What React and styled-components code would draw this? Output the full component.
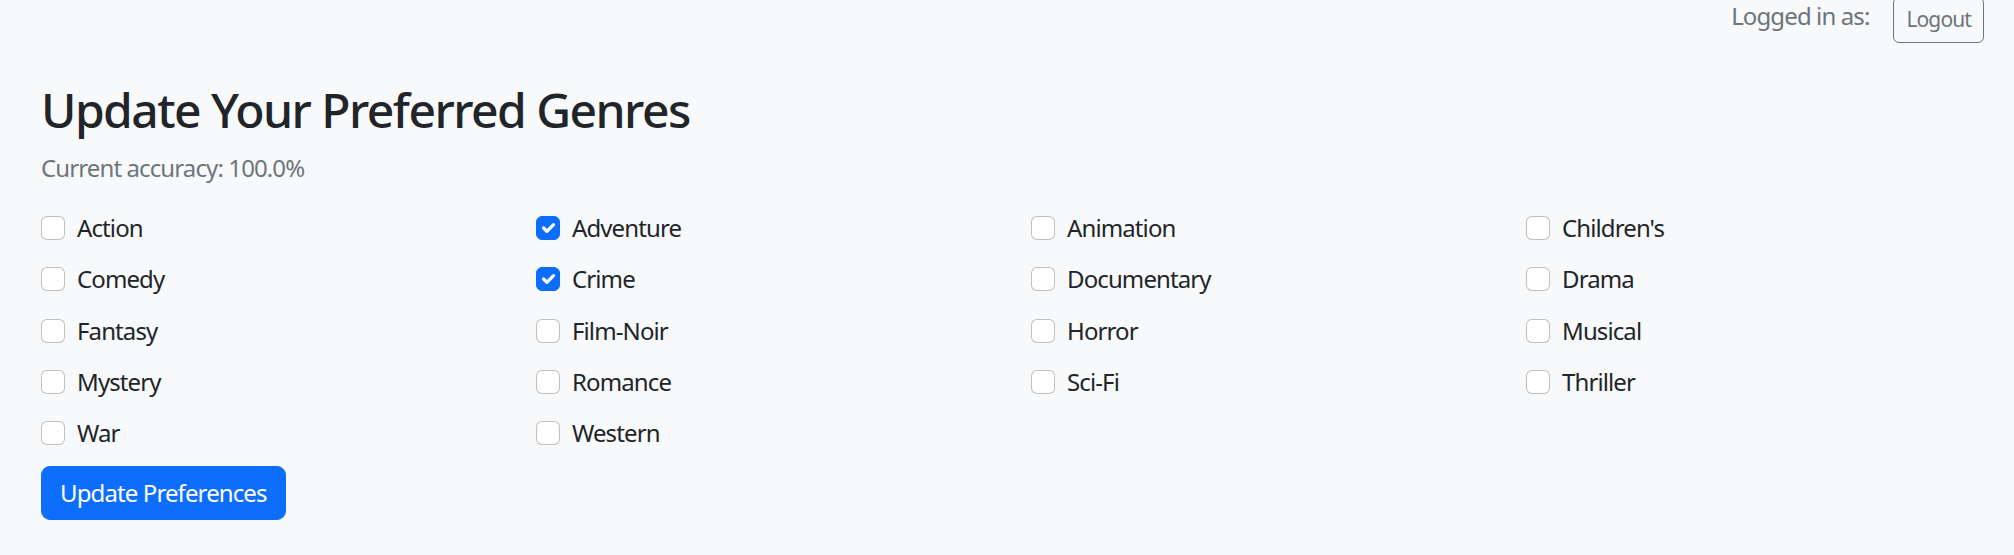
import React, { useState } from 'react';
import styled, { createGlobalStyle } from 'styled-components';

const GENRES = [
    'Action', 'Adventure', 'Animation', "Children's",
    'Comedy', 'Crime', 'Documentary', 'Drama',
    'Fantasy', 'Film-Noir', 'Horror', 'Musical',
    'Mystery', 'Romance', 'Sci-Fi', 'Thriller',
    'War', 'Western',
];

const GlobalStyle = createGlobalStyle`
    html, body {
        margin: 0;
        padding: 0;
        background: #f8f9fa;
    }
    body {
        font-family: "Noto Sans", "Open Sans", sans-serif;
        font-size: 24px;
        line-height: 1.5;
        letter-spacing: -0.037em;
        color: #212529;
        overflow: hidden;
    }
    * {
        box-sizing: border-box;
    }
`;

const App = () => {
    const [selected, setSelected] = useState(['Adventure', 'Crime']);

    const toggle = (genre) => {
        setSelected((prev) =>
            prev.includes(genre) ? prev.filter((g) => g !== genre) : [...prev, genre]
        );
    };

    return (
        <Page>
            <GlobalStyle />
            <TopBar>
                <LoggedIn>Logged in as:</LoggedIn>
                <LogoutButton type="button">Logout</LogoutButton>
            </TopBar>
            <Container>
                <Title>Update Your Preferred Genres</Title>
                <Accuracy>Current accuracy: 100.0%</Accuracy>
                <GenreGrid>
                    {GENRES.map((genre) => (
                        <FormCheck key={genre}>
                            <CheckInput
                                type="checkbox"
                                checked={selected.includes(genre)}
                                onChange={() => toggle(genre)}
                            />
                            <CheckLabel>{genre}</CheckLabel>
                        </FormCheck>
                    ))}
                </GenreGrid>
                <PrimaryButton type="button">Update Preferences</PrimaryButton>
            </Container>
        </Page>
    );
};

const Page = styled.div`
    width: 2014px;
    min-height: 555px;
`;

const TopBar = styled.div`
    display: flex;
    justify-content: flex-end;
    align-items: flex-start;
    gap: 24px;
    margin-top: -3px;
    padding-right: 30px;
`;

const LoggedIn = styled.span`
    margin-top: 1px;
    color: #6c757d;
    line-height: 36px;
`;

const LogoutButton = styled.button`
    font-family: inherit;
    font-size: 21px;
    letter-spacing: inherit;
    line-height: 31.5px;
    padding: 6px 12px;
    color: #6c757d;
    background: transparent;
    border: 1.5px solid #6c757d;
    border-radius: 6px;
    cursor: pointer;
`;

const Container = styled.div`
    padding: 38px 41px 0;
`;

const Title = styled.h2`
    margin: 0 0 12px;
    font-size: 48px;
    font-weight: 500;
    line-height: 1.2;
    letter-spacing: -0.032em;
    color: #212529;
`;

const Accuracy = styled.p`
    margin: 0 0 24px;
    color: #6c757d;
`;

const GenreGrid = styled.div`
    display: grid;
    grid-template-columns: repeat(4, 495px);
    row-gap: 15.3px;
    margin-bottom: 15px;
`;

const FormCheck = styled.label`
    display: flex;
    align-items: flex-start;
    gap: 12px;
    height: 36px;
    cursor: pointer;
`;

const CheckInput = styled.input`
    appearance: none;
    flex: none;
    width: 24px;
    height: 24px;
    margin: 6px 0 0;
    background: #fff;
    border: 1.5px solid rgba(0, 0, 0, 0.25);
    border-radius: 6px;
    cursor: pointer;

    &:checked {
        background-color: #0d6efd;
        border-color: #0d6efd;
        background-image: url("data:image/svg+xml,%3csvg xmlns='http://www.w3.org/2000/svg' viewBox='0 0 20 20'%3e%3cpath fill='none' stroke='%23fff' stroke-linecap='round' stroke-linejoin='round' stroke-width='3' d='m6 10 3 3 6-6'/%3e%3c/svg%3e");
        background-size: 100% 100%;
        background-repeat: no-repeat;
    }
`;

const CheckLabel = styled.span`
    line-height: 36px;
    color: #212529;
`;

const PrimaryButton = styled.button`
    font-family: inherit;
    font-size: 24px;
    letter-spacing: inherit;
    line-height: 36px;
    padding: 8px 18px;
    color: #fff;
    background: #0d6efd;
    border: 1.5px solid #0d6efd;
    border-radius: 9px;
    cursor: pointer;
`;

export default App;
